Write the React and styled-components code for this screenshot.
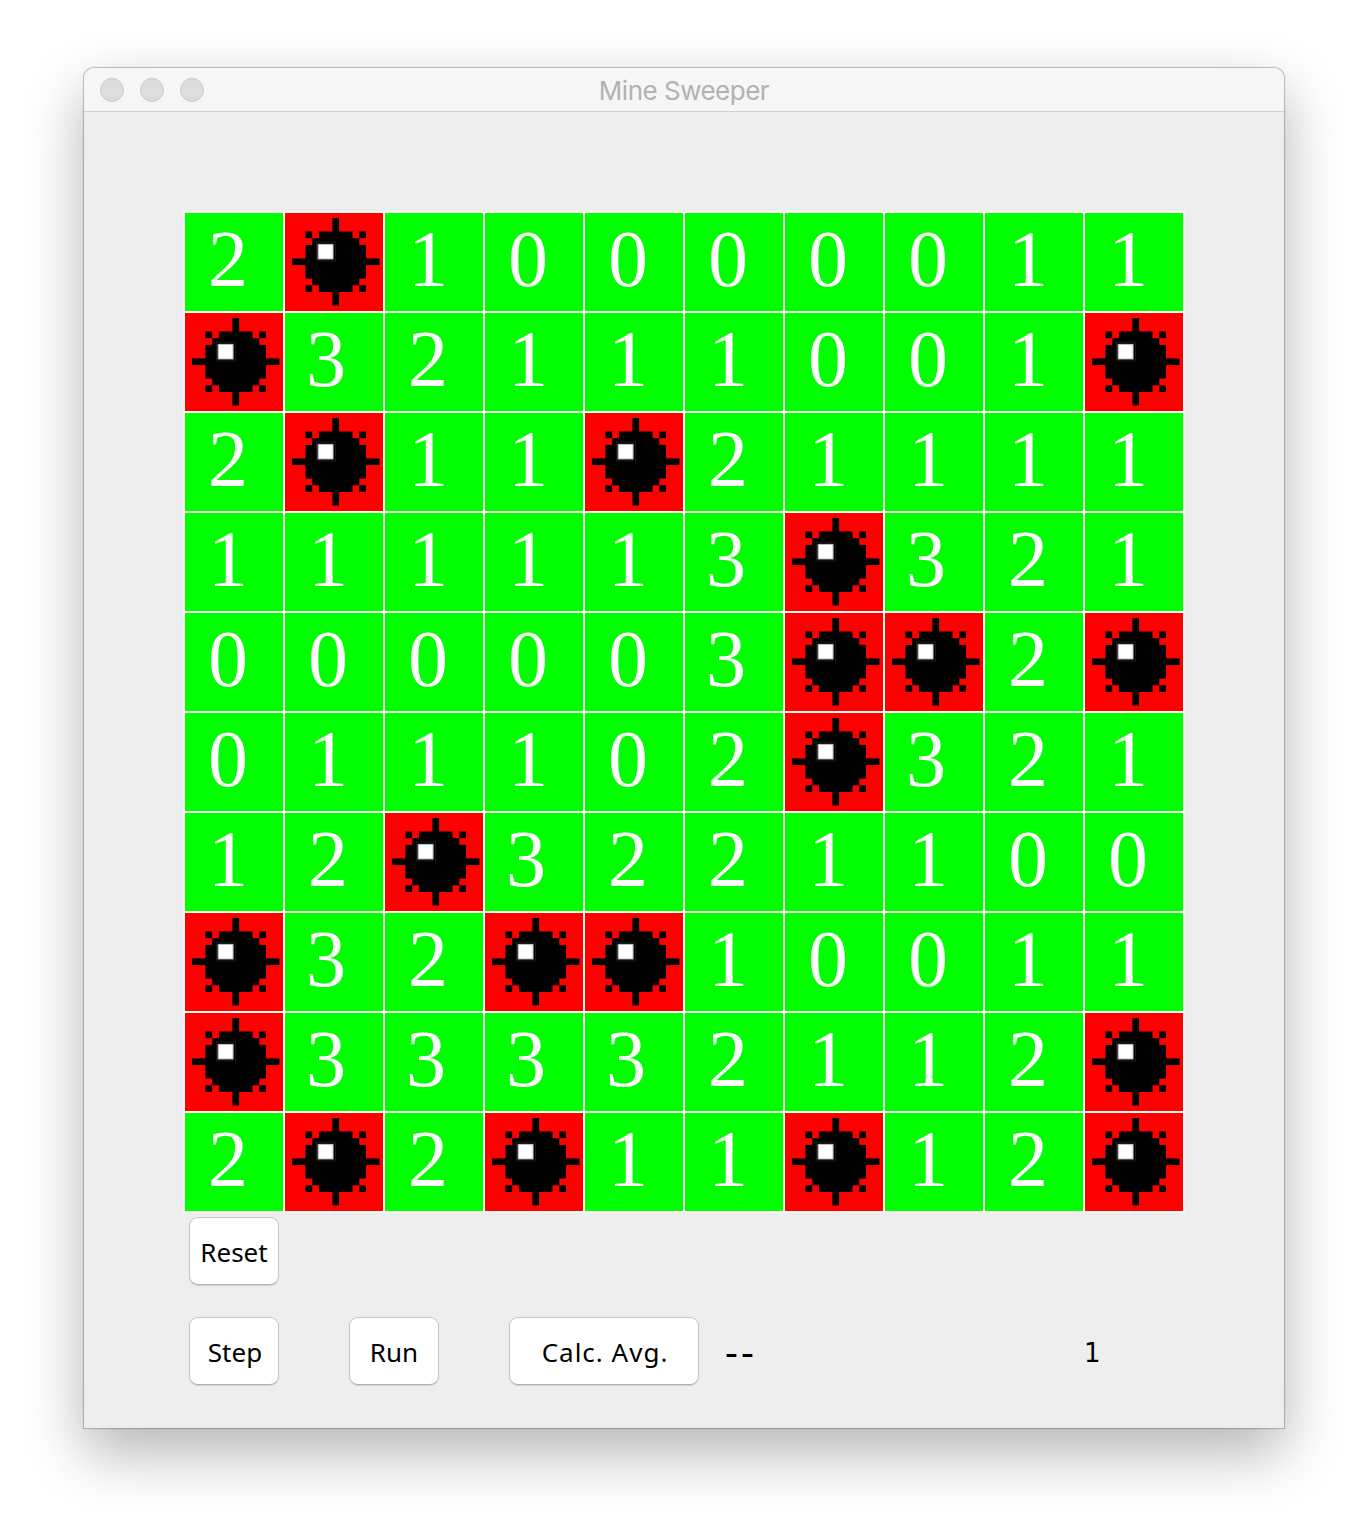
import React from 'react';
import styled, { createGlobalStyle } from 'styled-components';

const GlobalStyle = createGlobalStyle`
  * { box-sizing: border-box; }
  body { margin: 0; background: #fff; overflow: hidden; }
`;

const Desktop = styled.main`
  height: 1528px;
  padding: 68px 84px 100px;
`;

const Window = styled.section`
  display: flex;
  flex-direction: column;
  width: 1200px;
  height: 1360px;
  background: #eee;
  border-radius: 10px 10px 0 0;
  box-shadow: 0 0 1px 1px rgba(0, 0, 0, 0.24), 0 24px 60px rgba(0, 0, 0, 0.3);
`;

const TitleBar = styled.header`
  display: grid;
  grid-template-columns: 200px 1fr 200px;
  align-items: center;
  height: 44px;
  background: #f6f6f6;
  border-bottom: 1px solid #d0d0d0;
  border-radius: 10px 10px 0 0;
`;

const Lights = styled.div`
  display: flex;
  gap: 16px;
  padding-left: 16px;
`;

const Light = styled.span`
  width: 24px;
  height: 24px;
  border: 1px solid #cbcbcb;
  border-radius: 50%;
  background: #dddddd;
`;

const Title = styled.h1`
  margin: 3px 0 0;
  text-align: center;
  font: 400 26px/32px Inter, sans-serif;
  letter-spacing: -0.5px;
  color: #b2b2b2;
`;

const Board = styled.div`
  display: grid;
  grid-template: repeat(10, 98px) / repeat(10, 98px);
  gap: 2px;
  width: 1002px;
  margin: 99px 0 0 99px;
  padding: 2px;
  background: linear-gradient(#f9fff0, #f9fff0) content-box, #f7f7f7;
`;

const cellPadding = (value) => {
  if (value === '*') return '5px 0 0 7px';
  return value === '3' ? '2px 0 0 21px' : '2px 0 0 23px';
};

const Cell = styled.div`
  display: flex;
  height: 98px;
  padding: ${(p) => cellPadding(p.$value)};
  background: ${(p) => (p.$value === '*' ? '#ff0000' : '#00ff00')};
  font: 400 80px/88px "Liberation Serif", serif;
  color: #fff;
`;

const Controls = styled.div`
  display: grid;
  grid-template-columns: 90px 90px 190px 1fr;
  column-gap: 70px;
  padding: 0 80px 0 105px;
  margin-top: ${(p) => p.$top}px;
`;

const Button = styled.button`
  height: 68px;
  padding: 2px 0 0 ${(p) => p.$indent || 0}px;
  border: 1px solid #c6c6c6;
  border-bottom-color: #b0b0b0;
  border-radius: 9px;
  background: #fff;
  box-shadow: 0 1px 1px rgba(0, 0, 0, 0.12);
  font: 400 26px/32px "Noto Sans", sans-serif;
  letter-spacing: ${(p) => p.$tracking || 0}px;
  white-space: nowrap;
  color: #000;
`;

const Readout = styled.div`
  display: flex;
  align-items: center;
  gap: 328px;
  margin-left: -49px;
  padding-top: 4px;
  font: 400 26px/32px "DejaVu Sans", sans-serif;
  color: #000;
`;

const Average = styled.span`
  width: 36px;
  font: 400 38px/32px "DejaVu Sans Mono", monospace;
  letter-spacing: -6.9px;
`;

const Count = styled.span`
  width: 17px;
`;

const BALL = [
  [6, 0, 1, 13],
  [0, 6, 13, 1],
  [4, 2, 5, 9],
  [3, 3, 7, 7],
  [2, 4, 9, 5],
  [2, 2, 1, 1],
  [10, 2, 1, 1],
  [2, 10, 1, 1],
  [10, 10, 1, 1],
];

function Mine() {
  return (
    <svg width="88" height="88" viewBox="0 0 13.08 13.08" aria-label="mine">
      {BALL.map(([x, y, w, h]) => (
        <rect key={`${x}-${y}-${w}`} x={x} y={y} width={w} height={h} fill="#000" />
      ))}
      <rect x="3.55" y="3.5" width="3" height="2.95" fill="#1c1c1c" />
      <rect x="3.7" y="3.65" width="2.7" height="2.65" fill="#000" />
      <rect x="3.8" y="3.84" width="2.4" height="2.34" fill="#999" />
      <rect x="3.95" y="3.96" width="2.1" height="2.08" fill="#fff" />
    </svg>
  );
}

const FIELD = [
  '2*10000011',
  '*32111001*',
  '2*11*21111',
  '111113*321',
  '000003**2*',
  '011102*321',
  '12*3221100',
  '*32**10011',
  '*33332112*',
  '2*2*11*12*',
];

export default function App() {
  return (
    <Desktop>
      <GlobalStyle />
      <Window>
        <TitleBar>
          <Lights>
            <Light />
            <Light />
            <Light />
          </Lights>
          <Title>Mine Sweeper</Title>
        </TitleBar>
        <Board>
          {FIELD.flatMap((row, r) =>
            [...row].map((value, c) => (
              <Cell key={`${r}-${c}`} $value={value}>
                {value === '*' ? <Mine /> : value}
              </Cell>
            ))
          )}
        </Board>
        <Controls $top={4}>
          <Button>Reset</Button>
        </Controls>
        <Controls $top={32}>
          <Button $indent={2}>Step</Button>
          <Button>Run</Button>
          <Button $tracking={1} $indent={2}>Calc. Avg.</Button>
          <Readout>
            <Average>--</Average>
            <Count>1</Count>
          </Readout>
        </Controls>
      </Window>
    </Desktop>
  );
}
